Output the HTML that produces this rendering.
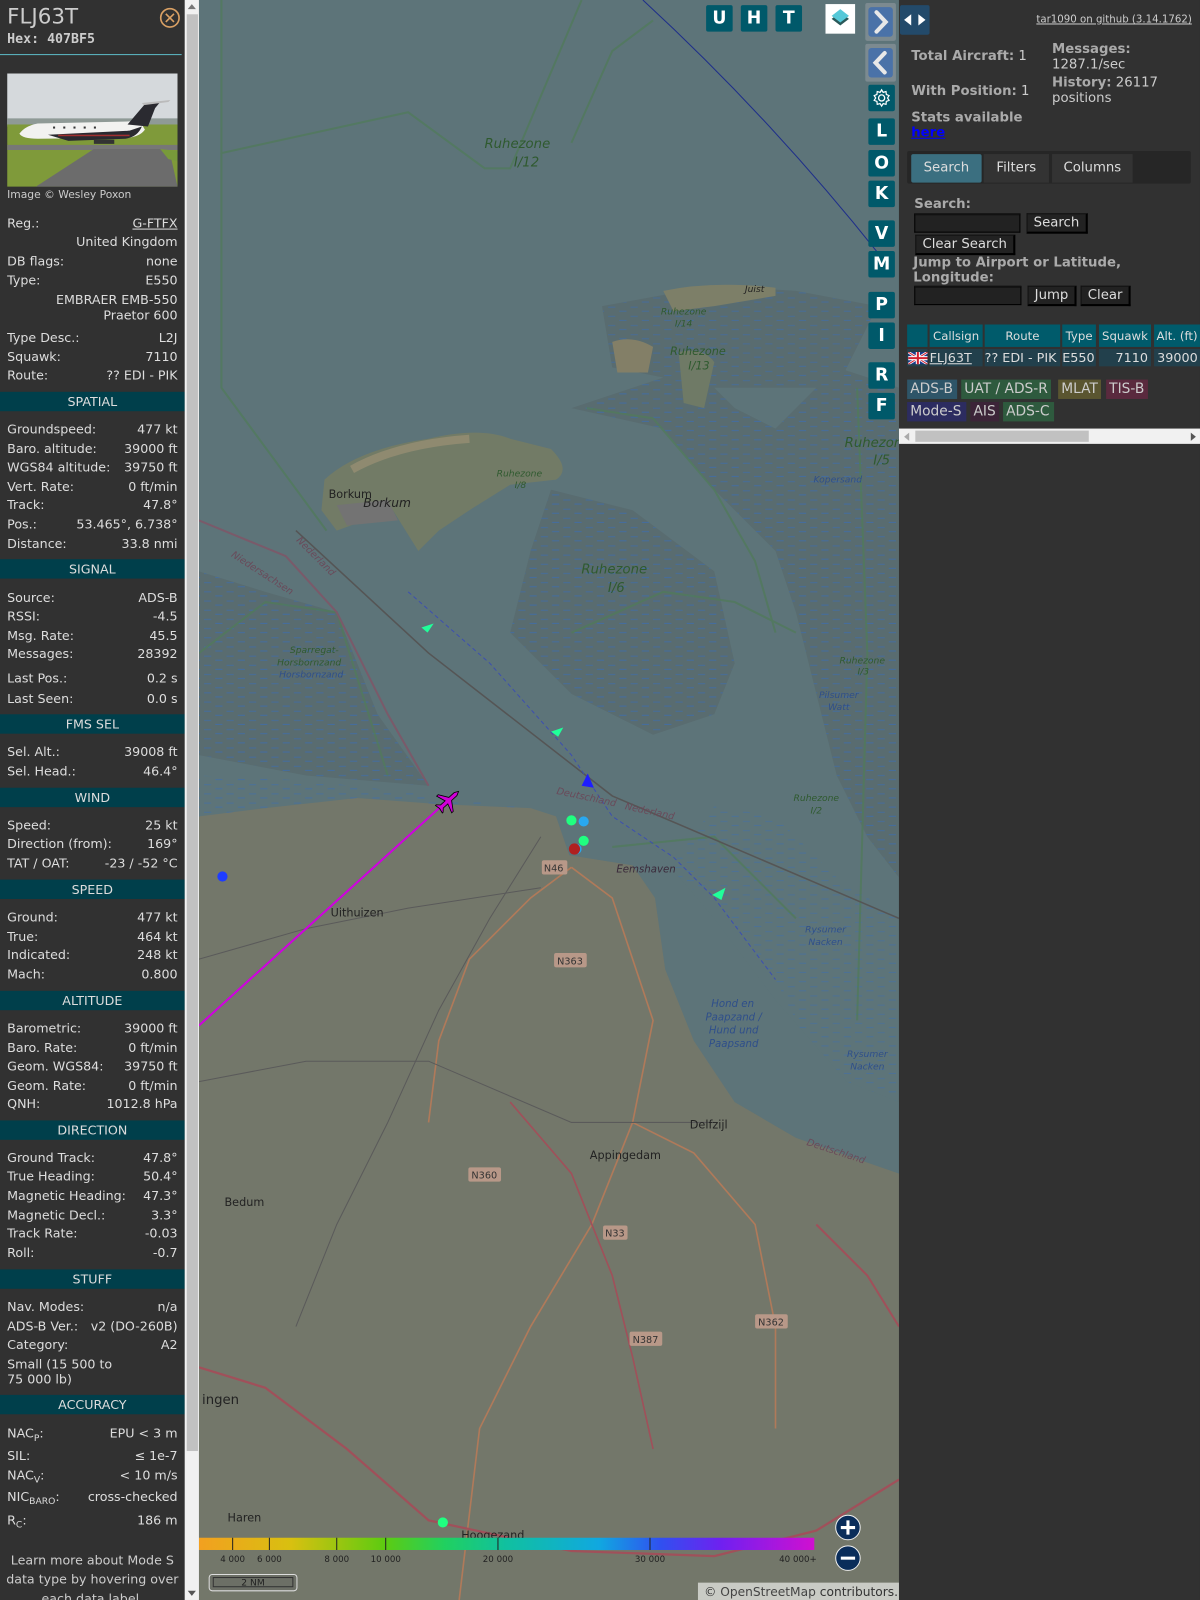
<!DOCTYPE html>
<html><head><meta charset="utf-8"><style>
*{margin:0;padding:0;box-sizing:border-box}
body{width:1200px;height:1600px;overflow:hidden;background:#313131;font-family:"DejaVu Sans","Liberation Sans",sans-serif}
#w{position:absolute;left:0;top:0;width:1176px;height:1568px;transform:scale(1.0204);transform-origin:0 0;overflow:hidden}
.lp{position:absolute;left:0;top:0;width:181px;height:1568px;background:#313131;color:#ddd;font-size:12.4px}
.r{position:absolute;left:7px;width:167px;height:17px;line-height:17px;display:flex;justify-content:space-between;white-space:nowrap}
.rr{position:absolute;left:7px;width:167px;text-align:right;line-height:15px}
.h{position:absolute;left:0;width:181px;height:19px;line-height:19px;background:#003f4b;text-align:center;font-size:12.4px;color:#ddd}
sub{font-size:9px;vertical-align:-3px}
.sb{position:absolute;left:181px;top:0;width:14px;height:1568px;background:#f1f1f1}
.map{position:absolute;left:195px;top:0;width:686px;height:1568px;background:#5d7479;overflow:hidden}
.mb{position:absolute;width:26px;height:26px;background:#00596a;color:#fff;font:bold 17px "DejaVu Sans",sans-serif;text-align:center;line-height:26px;border-radius:2px}
.rp{position:absolute;left:881px;top:0;width:295px;height:1568px;background:#313131;color:#ccc;font-size:13px}
.b{font-weight:bold;color:#aaa}
.btn{position:absolute;background:#222;border:1px solid #111;border-right:2px solid #000;border-bottom:2px solid #000;color:#ddd;font-size:13px;line-height:17px;padding:0 6px}
.inp{position:absolute;background:#222;border:1px solid #000;border-top:2px solid #111}
.th{position:absolute;top:318px;height:22px;line-height:22px;background:#005b6b;color:#ddd;font-size:11.5px;text-align:center}
.td{position:absolute;top:342px;height:17px;line-height:17px;background:#22404c;color:#ddd;font-size:12.5px}
.bd{position:absolute;height:19px;line-height:19px;padding:0 3px;font-size:13.5px;color:#ccc;white-space:nowrap}
</style></head><body><div id="w">

<div class="lp">
<div style="position:absolute;left:7px;top:4px;font-size:21px;color:#ccc">FLJ63T</div>
<div style="position:absolute;left:7px;top:31px;font:bold 13px 'DejaVu Sans Mono','Liberation Mono',monospace;color:#ccc">Hex: 407BF5</div>
<svg style="position:absolute;left:156px;top:7px" width="21" height="21"><circle cx="10.5" cy="10.5" r="9" fill="none" stroke="#d9a064" stroke-width="1.6"/><path d="M6.5 6.5L14.5 14.5M14.5 6.5L6.5 14.5" stroke="#d9a064" stroke-width="1.6"/></svg>
<div style="position:absolute;left:0;top:53px;width:178px;height:1px;background:#5bb8c4"></div>
<svg style="position:absolute;left:7px;top:72px" width="167" height="111">
<rect width="167" height="50" fill="#d5d9dc"/><rect y="44" width="167" height="8" fill="#8f9a96"/>
<rect y="50" width="167" height="61" fill="#7f9a3a"/>
<rect y="70" width="167" height="5" fill="#777"/>
<path d="M28 111L85 74L150 74L160 80L167 111Z" fill="#6c6c6c"/>
<path d="M150 74L167 76L167 86L158 84Z" fill="#789a3a"/>
<path d="M12 59Q18 51 30 49L120 47Q130 47 132 50L135 55Q130 62 118 63L30 64Q15 64 12 59Z" fill="#f2f2f0"/>
<path d="M40 60L120 56L132 52Q128 62 116 64L60 66Z" fill="#2a2a30"/>
<path d="M118 50L135 30L150 28L145 34L138 52Z" fill="#2a2a30"/>
<path d="M132 29L160 26L158 28L134 31Z" fill="#bbb"/>
<rect x="50" y="60" width="70" height="1.5" fill="#a03030"/>
<g fill="#333"><rect x="45" y="52" width="2" height="2"/><rect x="55" y="52" width="2" height="2"/><rect x="65" y="52" width="2" height="2"/><rect x="75" y="52" width="2" height="2"/><rect x="85" y="52" width="2" height="2"/></g>
<path d="M85 65h20v4h-20Z" fill="#333"/>
</svg>
<div style="position:absolute;left:7px;top:185px;font-size:10.5px;color:#ccc">Image © Wesley Poxon</div>
<div class="r" style="top:210px"><span>Reg.:</span><span style="text-decoration:underline">G-FTFX</span></div>
<div class="rr" style="top:229px">United Kingdom</div>
<div class="r" style="top:247px"><span>DB flags:</span><span>none</span></div>
<div class="r" style="top:266px"><span>Type:</span><span>E550</span></div>
<div class="rr" style="top:286px">EMBRAER EMB-550<br>Praetor 600</div>
<div class="r" style="top:322px"><span>Type Desc.:</span><span>L2J</span></div>
<div class="r" style="top:341px"><span>Squawk:</span><span>7110</span></div>
<div class="r" style="top:359px"><span>Route:</span><span>?? EDI - PIK</span></div>
<div class="h" style="top:384px">SPATIAL</div>
<div class="r" style="top:412px"><span>Groundspeed:</span><span>477 kt</span></div>
<div class="r" style="top:431px"><span>Baro. altitude:</span><span>39000 ft</span></div>
<div class="r" style="top:449px"><span>WGS84 altitude:</span><span>39750 ft</span></div>
<div class="r" style="top:468px"><span>Vert. Rate:</span><span>0 ft/min</span></div>
<div class="r" style="top:486px"><span>Track:</span><span>47.8°</span></div>
<div class="r" style="top:505px"><span>Pos.:</span><span>53.465°, 6.738°</span></div>
<div class="r" style="top:524px"><span>Distance:</span><span>33.8 nmi</span></div>
<div class="h" style="top:548px">SIGNAL</div>
<div class="r" style="top:577px"><span>Source:</span><span>ADS-B</span></div>
<div class="r" style="top:595px"><span>RSSI:</span><span>-4.5</span></div>
<div class="r" style="top:614px"><span>Msg. Rate:</span><span>45.5</span></div>
<div class="r" style="top:632px"><span>Messages:</span><span>28392</span></div>
<div class="r" style="top:656px"><span>Last Pos.:</span><span>0.2 s</span></div>
<div class="r" style="top:676px"><span>Last Seen:</span><span>0.0 s</span></div>
<div class="h" style="top:700px">FMS SEL</div>
<div class="r" style="top:728px"><span>Sel. Alt.:</span><span>39008 ft</span></div>
<div class="r" style="top:747px"><span>Sel. Head.:</span><span>46.4°</span></div>
<div class="h" style="top:772px">WIND</div>
<div class="r" style="top:800px"><span>Speed:</span><span>25 kt</span></div>
<div class="r" style="top:818px"><span>Direction (from):</span><span>169°</span></div>
<div class="r" style="top:837px"><span>TAT / OAT:</span><span>-23 / -52 °C</span></div>
<div class="h" style="top:862px">SPEED</div>
<div class="r" style="top:890px"><span>Ground:</span><span>477 kt</span></div>
<div class="r" style="top:909px"><span>True:</span><span>464 kt</span></div>
<div class="r" style="top:927px"><span>Indicated:</span><span>248 kt</span></div>
<div class="r" style="top:946px"><span>Mach:</span><span>0.800</span></div>
<div class="h" style="top:971px">ALTITUDE</div>
<div class="r" style="top:999px"><span>Barometric:</span><span>39000 ft</span></div>
<div class="r" style="top:1018px"><span>Baro. Rate:</span><span>0 ft/min</span></div>
<div class="r" style="top:1036px"><span>Geom. WGS84:</span><span>39750 ft</span></div>
<div class="r" style="top:1055px"><span>Geom. Rate:</span><span>0 ft/min</span></div>
<div class="r" style="top:1073px"><span>QNH:</span><span>1012.8 hPa</span></div>
<div class="h" style="top:1098px">DIRECTION</div>
<div class="r" style="top:1126px"><span>Ground Track:</span><span>47.8°</span></div>
<div class="r" style="top:1144px"><span>True Heading:</span><span>50.4°</span></div>
<div class="r" style="top:1163px"><span>Magnetic Heading:</span><span>47.3°</span></div>
<div class="r" style="top:1182px"><span>Magnetic Decl.:</span><span>3.3°</span></div>
<div class="r" style="top:1200px"><span>Track Rate:</span><span>-0.03</span></div>
<div class="r" style="top:1219px"><span>Roll:</span><span>-0.7</span></div>
<div class="h" style="top:1244px">STUFF</div>
<div class="r" style="top:1272px"><span>Nav. Modes:</span><span>n/a</span></div>
<div class="r" style="top:1291px"><span>ADS-B Ver.:</span><span>v2 (DO-260B)</span></div>
<div class="r" style="top:1309px"><span>Category:</span><span>A2</span></div>
<div style="position:absolute;left:7px;top:1329px;line-height:15px">Small (15 500 to<br>75 000 lb)</div>
<div class="h" style="top:1367px">ACCURACY</div>
<div class="r" style="top:1396px"><span>NAC<sub>P</sub>:</span><span>EPU &lt; 3 m</span></div>
<div class="r" style="top:1418px"><span>SIL:</span><span>≤ 1e-7</span></div>
<div class="r" style="top:1437px"><span>NAC<sub>V</sub>:</span><span>&lt; 10 m/s</span></div>
<div class="r" style="top:1458px"><span>NIC<sub>BARO</sub>:</span><span>cross-checked</span></div>
<div class="r" style="top:1481px"><span>R<sub>C</sub>:</span><span>186 m</span></div>
<div style="position:absolute;left:0;top:1519px;width:181px;text-align:center;line-height:19px;color:#ccc">Learn more about Mode S data type by hovering over each data label.</div>
</div>
<div class="sb"><div style="position:absolute;left:2px;top:14px;width:11px;height:1408px;background:#c1c1c1"></div>
<div style="position:absolute;left:3px;top:4px;border:4px solid transparent;border-bottom:5px solid #777;border-top:0"></div>
<div style="position:absolute;left:3px;top:1559px;border:4px solid transparent;border-top:5px solid #555;border-bottom:0"></div></div>

<div class="map">
<svg width="686" height="1568" style="position:absolute;left:0;top:0">
<defs><pattern id="wd" width="22" height="9" patternUnits="userSpaceOnUse"><path d="M2 4h7M13 8h7" stroke="#3d6eb0" stroke-width="1"/></pattern></defs>
<g transform="translate(-195,0)">
<path d="M560 400L650 420L700 480L760 540L780 600L800 680L820 760L850 820L881 860L881 380L820 360L760 420L720 400L680 360Z" fill="#596c70"/>
<path d="M560 400L650 420L700 480L760 540L780 600L800 680L820 760L850 820L881 860L881 380L820 360L760 420L720 400L680 360Z" fill="url(#wd)" opacity=".7"/>
<path d="M540 480L620 500L700 560L720 650L700 700L640 720L560 680L500 620L520 540Z" fill="#596c70"/>
<path d="M540 480L620 500L700 560L720 650L700 700L640 720L560 680L500 620L520 540Z" fill="url(#wd)" opacity=".7"/>
<path d="M195 560L260 580L330 600L370 700L420 770L300 760L195 740Z" fill="#596c70"/>
<path d="M195 560L260 580L330 600L370 700L420 770L300 760L195 740Z" fill="url(#wd)" opacity=".7"/>
<path d="M195 760L300 765L430 780L540 795L440 800L300 790L195 800Z" fill="url(#wd)" opacity=".6"/>
<path d="M590 300L700 280L780 285L860 300L820 380L700 380L600 360Z" fill="#596c70"/>
<path d="M590 300L700 280L780 285L860 300L820 380L700 380L600 360Z" fill="url(#wd)" opacity=".6"/>
<path d="M650 860L700 880L760 960L800 1040L860 1100L881 1110L881 900L820 860L760 800L700 790Z" fill="url(#wd)" opacity=".5"/>
<path d="M318 470Q350 440 420 430Q470 418 500 430L540 440Q560 460 545 470L500 475L460 500L430 520L410 540L385 500L330 520L315 500Z" fill="#727b66"/>
<path d="M345 460Q390 435 460 430" stroke="#8f8a70" stroke-width="8" fill="none"/>
<path d="M330 495L380 490L390 510L340 515Z" fill="#737373"/>
<path d="M650 285Q700 275 760 282L760 290L700 300L660 305Z" fill="#7d7f68"/>
<path d="M600 335Q620 328 640 340L635 365L605 365Z" fill="#837f67"/>
<path d="M665 345Q690 340 700 355L690 400L670 395Z" fill="#6f7a66"/>
<path d="M195 800L260 792L350 782L430 788L520 792L545 800L558 838L620 848L642 880L652 950L680 1020L720 1080L780 1115L881 1150L881 1568L195 1568Z" fill="#73776a"/>
<path d="M545 800L590 790L640 830L700 900L760 980L830 1060L881 1080L881 1150L780 1115L720 1080L680 1020L652 950L642 880L620 848L558 838Z" fill="#5d7479"/>
<g stroke="#517a5c" stroke-width="2" fill="none" opacity=".8">
<path d="M217 0L217 150L400 110L475 165L500 165L570 0"/><path d="M217 150L217 380L320 520"/>
<path d="M560 140L600 50L640 20"/><path d="M575 400L640 410L700 480L740 550L760 620"/>
<path d="M560 620L650 580L720 590L780 620"/><path d="M600 830L700 820L740 860L780 900"/>
<path d="M840 380L850 640L840 1000"/><path d="M380 760L330 600L260 590L195 640"/>
</g>
<g stroke="#555" stroke-width="1.5" fill="none"><path d="M290 520L420 640L600 780L881 900"/></g>
<path d="M195 510L280 545L330 600L380 700L420 770" stroke="#7a5a6a" stroke-width="2" fill="none"/>
<path d="M400 580L480 650L560 740L600 800L660 840L700 880L760 960" stroke="#3d4fb0" stroke-width="1" stroke-dasharray="4 3" fill="none"/>
<path d="M630 0Q760 120 870 260" stroke="#1e2e8a" stroke-width="1" fill="none"/>
<g fill="none" stroke-width="1.6">
<path d="M450 1568L470 1400L520 1300L580 1200L620 1100L640 1000L600 880L560 850" stroke="#b07a5a"/>
<path d="M195 1340L260 1360L340 1420L420 1490L560 1520L700 1525L800 1500L881 1450" stroke="#a0505a" stroke-width="2.2"/>
<path d="M560 850L520 880L460 940L430 1020L420 1100" stroke="#b07a5a"/>
<path d="M500 1080L560 1150L600 1250L620 1330L640 1420" stroke="#a0505a"/>
<path d="M620 1100L680 1130L740 1200L760 1300L760 1400" stroke="#b07a5a"/>
<path d="M195 1060L300 1040L420 1040L560 1100L700 1100" stroke="#5a5a5a" stroke-width="1"/>
<path d="M195 940L300 910L400 890L530 870" stroke="#5a5a5a" stroke-width="1"/>
<path d="M530 820L480 900L430 990L380 1100L330 1200L290 1300" stroke="#5a5a5a" stroke-width="1"/>
</g>
<path d="M800 1200L850 1250L881 1300" stroke="#a0505a" stroke-width="2" fill="none"/>
<path d="M195 1005L437 786" stroke="#d000e0" stroke-width="2"/>
<g transform="translate(439,785) rotate(47.8)" fill="#d000d8" stroke="#000" stroke-width=".8"><path d="M0 -14L2 -10L2 -3L11 3L11 5L2 2L2 8L5 11L5 12L0 11L-5 12L-5 11L-2 8L-2 2L-11 5L-11 3L-2 -3L-2 -10Z"/></g>
<circle cx="218" cy="859" r="5" fill="#1e3cff"/>
<circle cx="560" cy="804" r="5" fill="#20ff80"/><circle cx="572" cy="805" r="5" fill="#29a8f0"/>
<circle cx="572" cy="824" r="5" fill="#20ff80"/><circle cx="565" cy="832" r="5" fill="#29a8f0"/><circle cx="563" cy="832" r="5.5" fill="#b02020"/>
<circle cx="434" cy="1492" r="5" fill="#20ff80"/>
<path d="M413 615L425 611L419 620Z" fill="#20ff9a"/><path d="M540 717L552 713L547 722Z" fill="#20ff9a"/>
<path d="M698 877L711 870L707 882Z" fill="#20ff9a"/><path d="M576 758L582 772L570 770Z" fill="#1e1eff"/>
<g font-family="DejaVu Sans,sans-serif" font-style="italic" fill="#2f5a2f" text-anchor="middle">
<text x="507" y="145" font-size="13">Ruhezone</text><text x="516" y="163" font-size="13">I/12</text>
<text x="602" y="562" font-size="13">Ruhezone</text><text x="604" y="580" font-size="13">I/6</text>
<text x="860" y="438" font-size="13">Ruhezone</text><text x="864" y="455" font-size="13">I/5</text>
<text x="684" y="348" font-size="11">Ruhezone</text><text x="685" y="362" font-size="11">I/13</text>
<text x="670" y="308" font-size="9">Ruhezone</text><text x="670" y="320" font-size="9">I/14</text>
<text x="509" y="467" font-size="9">Ruhezone</text><text x="510" y="478" font-size="9">I/8</text>
<text x="308" y="640" font-size="9">Sparregat-</text><text x="303" y="652" font-size="9">Horsbornzand</text>
<text x="845" y="650" font-size="9">Ruhezone</text><text x="846" y="661" font-size="9">I/3</text>
<text x="800" y="785" font-size="9">Ruhezone</text><text x="800" y="797" font-size="9">I/2</text>
</g>
<g font-family="DejaVu Sans,sans-serif" font-style="italic" fill="#2f4f8a" text-anchor="middle" font-size="9">
<text x="305" y="664">Horsbornzand</text><text x="821" y="473">Kopersand</text><text x="822" y="684">Pilsumer</text><text x="822" y="696">Watt</text>
<text x="809" y="914">Rysumer</text><text x="809" y="926">Nacken</text><text x="850" y="1036">Rysumer</text><text x="850" y="1048">Nacken</text>
<text x="718" y="987" font-size="10">Hond en</text><text x="719" y="1000" font-size="10">Paapzand /</text><text x="719" y="1013" font-size="10">Hund und</text><text x="719" y="1026" font-size="10">Paapsand</text>
</g>
<g font-family="DejaVu Sans,sans-serif" fill="#222" font-size="11">
<text x="322" y="488">Borkum</text><text x="356" y="497" font-style="italic" font-size="12">Borkum</text>
<text x="324" y="898">Uithuizen</text><text x="578" y="1136">Appingedam</text><text x="676" y="1106">Delfzijl</text>
<text x="220" y="1182">Bedum</text><text x="223" y="1491">Haren</text><text x="452" y="1508">Hoogezand</text><text x="198" y="1376" font-size="13">ingen</text>
<text x="730" y="286" font-size="9" font-style="italic">Juist</text><text x="604" y="855" font-size="10" font-style="italic" fill="#3a2a3a">Eemshaven</text>
</g>
<g font-family="DejaVu Sans,sans-serif" fill="#6a4a5a" font-size="9.5" font-style="italic">
<text x="545" y="778" transform="rotate(12 545 778)">Deutschland</text><text x="612" y="793" transform="rotate(12 612 793)">Nederland</text>
<text x="290" y="530" transform="rotate(45 290 530)">Nederland</text><text x="226" y="545" transform="rotate(33 226 545)">Niedersachsen</text>
<text x="790" y="1122" transform="rotate(18 790 1122)">Deutschland</text>
</g>
<g font-family="DejaVu Sans,sans-serif" font-size="9.5" fill="#333">
<rect x="531" y="843" width="25" height="14" fill="#b89888" rx="2"/><text x="533" y="854">N46</text>
<rect x="543" y="934" width="32" height="14" fill="#b89888" rx="2"/><text x="546" y="945">N363</text>
<rect x="459" y="1144" width="32" height="14" fill="#b89888" rx="2"/><text x="462" y="1155">N360</text>
<rect x="591" y="1201" width="24" height="14" fill="#b89888" rx="2"/><text x="593" y="1212">N33</text>
<rect x="617" y="1305" width="32" height="14" fill="#b89888" rx="2"/><text x="620" y="1316">N387</text>
<rect x="740" y="1288" width="32" height="14" fill="#b89888" rx="2"/><text x="743" y="1299">N362</text>
</g>
<defs><linearGradient id="cg" x1="0" x2="1"><stop offset="0" stop-color="#f2a020"/><stop offset=".15" stop-color="#d8c010"/><stop offset=".3" stop-color="#5ecb10"/><stop offset=".4" stop-color="#20d060"/><stop offset=".5" stop-color="#10c0a0"/><stop offset=".65" stop-color="#10a8e0"/><stop offset=".75" stop-color="#3050f0"/><stop offset=".85" stop-color="#7020f0"/><stop offset="1" stop-color="#d010d0"/></linearGradient></defs>
<rect x="195" y="1507" width="603" height="12" fill="url(#cg)"/>
<g stroke="#222" stroke-width="1"><path d="M228 1507v12M264 1507v12M330 1507v12M378 1507v12M488 1507v12M637 1507v12"/></g>
<g font-family="DejaVu Sans,sans-serif" font-size="8.5" fill="#222" text-anchor="middle">
<text x="228" y="1531">4 000</text><text x="264" y="1531">6 000</text><text x="330" y="1531">8 000</text><text x="378" y="1531">10 000</text><text x="488" y="1531">20 000</text><text x="637" y="1531">30 000</text><text x="782" y="1531">40 000+</text></g>
<rect x="205" y="1543" width="86" height="16" fill="#6c6f66" stroke="#ddd" rx="3"/><rect x="209" y="1546" width="78" height="9" fill="none" stroke="#333"/>
<text x="248" y="1554" font-family="DejaVu Sans,sans-serif" font-size="9" fill="#222" text-anchor="middle">2 NM</text>
<circle cx="831" cy="1497" r="12" fill="#0a2d5a" stroke="#eee" stroke-width="1"/><path d="M824 1497h14M831 1490v14" stroke="#fff" stroke-width="3"/>
<circle cx="831" cy="1527" r="12" fill="#0a2d5a" stroke="#eee" stroke-width="1"/><path d="M824 1527h14" stroke="#fff" stroke-width="3"/>
<rect x="684" y="1551" width="200" height="17" fill="#c9cbc5"/>
<text x="690" y="1564" font-family="DejaVu Sans,sans-serif" font-size="12" fill="#333">© <tspan fill="#444">OpenStreetMap</tspan> contributors.</text>
</g></svg>
<div class="mb" style="left:497px;top:5px">U</div><div class="mb" style="left:531px;top:5px">H</div><div class="mb" style="left:565px;top:5px">T</div>
<div style="position:absolute;left:614px;top:4px;width:29px;height:29px;background:#fff">
<svg width="29" height="29"><path d="M14.5 8L23 14.5L14.5 21L6 14.5Z" fill="#2a5a5a"/><path d="M14.5 5L23 11.5L14.5 18L6 11.5Z" fill="#55c8d8"/></svg></div>
<div style="position:absolute;left:653px;top:3px;width:30px;height:37px;background:#7c8a90;border-radius:2px"><div style="position:absolute;left:3px;top:4px;width:24px;height:29px;background:#4a72a8;border-radius:3px"><svg width="24" height="29"><path d="M8 5L17 14.5L8 24" stroke="#e8e8e8" stroke-width="4" fill="none" stroke-linecap="round"/></svg></div></div>
<div style="position:absolute;left:653px;top:43px;width:30px;height:37px;background:#7c8a90;border-radius:2px"><div style="position:absolute;left:3px;top:4px;width:24px;height:29px;background:#4a72a8;border-radius:3px"><svg width="24" height="29"><path d="M16 5L7 14.5L16 24" stroke="#e8e8e8" stroke-width="4" fill="none" stroke-linecap="round"/></svg></div></div>
<div class="mb" style="left:656px;top:83px"><svg width="26" height="26"><circle cx="13" cy="13" r="3" fill="none" stroke="#fff" stroke-width="1.3"/><path d="M13 5l1.5 2.5 2.8-.8.3 2.9 2.7 1.1-1.5 2.3 1.5 2.3-2.7 1.1-.3 2.9-2.8-.8L13 21l-1.5-2.5-2.8.8-.3-2.9-2.7-1.1 1.5-2.3-1.5-2.3 2.7-1.1.3-2.9 2.8.8Z" fill="none" stroke="#fff" stroke-width="1.2"/></svg></div>
<div class="mb" style="left:656px;top:116px">L</div><div class="mb" style="left:656px;top:147px">O</div><div class="mb" style="left:656px;top:177px">K</div>
<div class="mb" style="left:656px;top:216px">V</div><div class="mb" style="left:656px;top:246px">M</div>
<div class="mb" style="left:656px;top:286px">P</div><div class="mb" style="left:656px;top:316px">I</div>
<div class="mb" style="left:656px;top:355px">R</div><div class="mb" style="left:656px;top:385px">F</div>
</div>

<div class="rp">
<div style="position:absolute;left:1px;top:5px;width:29px;height:29px;background:#234a6a;border-radius:2px"><svg width="29" height="29"><path d="M4 14.5L11 9V20Z M25 14.5L18 9V20Z" fill="#fff"/></svg></div>
<div style="position:absolute;right:8px;top:14px;font-size:10px;text-decoration:underline;color:#ccc">tar1090 on github (3.14.1762)</div>
<div style="position:absolute;left:12px;top:48px"><span class="b">Total Aircraft:</span> 1</div>
<div style="position:absolute;left:150px;top:41px;line-height:15px"><span class="b">Messages:</span><br>1287.1/sec</div>
<div style="position:absolute;left:12px;top:82px"><span class="b">With Position:</span> 1</div>
<div style="position:absolute;left:150px;top:74px;line-height:15px"><span class="b">History:</span> 26117<br>positions</div>
<div style="position:absolute;left:12px;top:108px;line-height:15px"><span class="b">Stats available</span><br><span style="color:#00f;font-weight:bold;text-decoration:underline">here</span></div>
<div style="position:absolute;left:8px;top:148px;width:278px;height:32px;background:#262626;border-radius:2px"></div>
<div style="position:absolute;left:12px;top:151px;width:69px;height:28px;background:#3b6f80;line-height:28px;text-align:center;color:#ddd;border-radius:2px">Search</div>
<div style="position:absolute;left:83px;top:151px;width:64px;height:28px;background:#333;line-height:28px;text-align:center;color:#ddd">Filters</div>
<div style="position:absolute;left:150px;top:151px;width:79px;height:28px;background:#333;line-height:28px;text-align:center;color:#ddd">Columns</div>
<div class="b" style="position:absolute;left:15px;top:193px">Search:</div>
<div class="inp" style="left:15px;top:209px;width:104px;height:19px"></div>
<div class="btn" style="left:125px;top:209px">Search</div>
<div class="btn" style="left:16px;top:230px">Clear Search</div>
<div class="b" style="position:absolute;left:14px;top:250px;line-height:15px">Jump to Airport or Latitude,<br>Longitude:</div>
<div class="inp" style="left:15px;top:280px;width:105px;height:19px"></div>
<div class="btn" style="left:126px;top:280px">Jump</div>
<div class="btn" style="left:178px;top:280px">Clear</div>
<div class="th" style="left:8px;width:20px"></div>
<div class="th" style="left:30px;width:52px">Callsign</div>
<div class="th" style="left:84px;width:74px">Route</div>
<div class="th" style="left:160px;width:33px">Type</div>
<div class="th" style="left:196px;width:51px">Squawk</div>
<div class="th" style="left:250px;width:45px">Alt. (ft)</div>
<div class="td" style="left:8px;width:20px"><svg width="19" height="12" style="margin:3px 0 0 1px"><rect width="19" height="12" fill="#1a3a8a"/><path d="M0 0L19 12M19 0L0 12" stroke="#fff" stroke-width="2.5"/><path d="M0 0L19 12M19 0L0 12" stroke="#d02030" stroke-width="1"/><path d="M9.5 0V12M0 6H19" stroke="#fff" stroke-width="4"/><path d="M9.5 0V12M0 6H19" stroke="#d02030" stroke-width="2"/></svg></div>
<div class="td" style="left:30px;width:52px;text-decoration:underline">FLJ63T</div>
<div class="td" style="left:84px;width:74px">?? EDI - PIK</div>
<div class="td" style="left:160px;width:33px">E550</div>
<div class="td" style="left:196px;width:51px;text-align:right;padding-right:3px">7110</div>
<div class="td" style="left:250px;width:45px;padding-left:3px">39000</div>
<div class="bd" style="left:8px;top:372px;width:49px;background:#2e5568">ADS-B</div>
<div class="bd" style="left:61px;top:372px;width:88px;background:#2e5a3e">UAT / ADS-R</div>
<div class="bd" style="left:156px;top:372px;width:42px;background:#5a5530">MLAT</div>
<div class="bd" style="left:203px;top:372px;width:41px;background:#5a2a3e">TIS-B</div>
<div class="bd" style="left:8px;top:394px;width:58px;background:#2c2c60">Mode-S</div>
<div class="bd" style="left:70px;top:394px;width:28px;background:#3c2438">AIS</div>
<div class="bd" style="left:102px;top:394px;width:50px;background:#2e5a3e">ADS-C</div>
<div style="position:absolute;left:0;top:420px;width:295px;height:15px;background:#f1f1f1"><div style="position:absolute;left:16px;top:2px;width:170px;height:11px;background:#c1c1c1"></div>
<div style="position:absolute;left:5px;top:4px;border:4px solid transparent;border-right:5px solid #aaa;border-left:0"></div>
<div style="position:absolute;right:4px;top:4px;border:4px solid transparent;border-left:5px solid #555;border-right:0"></div></div>
</div>
</div></body></html>
